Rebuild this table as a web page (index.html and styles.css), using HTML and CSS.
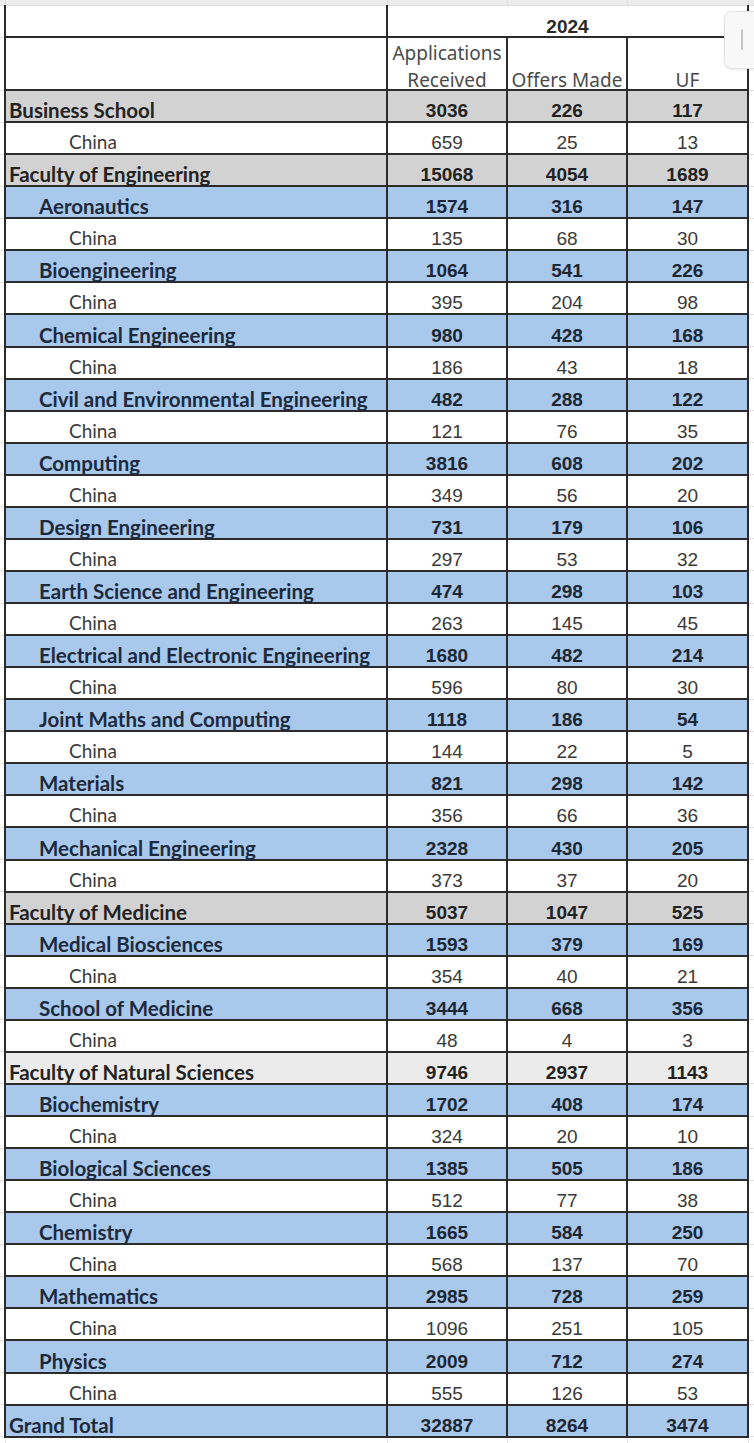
FILE: index.html
```html
<!DOCTYPE html>
<html lang="en">
<head>
<meta charset="utf-8">
<title>Applications 2024</title>
<link rel="stylesheet" href="styles.css">
</head>
<body>
<div class="sheet">
<table class="grid">
  <colgroup>
    <col class="c-gut"><col class="c-label"><col class="c-num"><col class="c-num"><col class="c-num3"><col class="c-gut2">
  </colgroup>
  <thead>
    <tr class="strip"><td class="gut"></td><td></td><td></td><td></td><td></td><td class="gut"></td></tr>
    <tr class="h1"><td class="gut"></td><td class="lbl"></td><th colspan="3" class="year">2024</th><td class="gut"></td></tr>
    <tr class="h2"><td class="gut"></td><td class="lbl"></td><th class="hd"><span class="hdt">Applications<br>Received</span></th><th class="hd"><span class="hdt">Offers Made</span></th><th class="hd"><span class="hdt">UF</span></th><td class="gut"></td></tr>
  </thead>
  <tbody>
    <tr class="fac"><td class="gut"></td><td class="lbl l0">Business School</td><td>3036</td><td>226</td><td>117</td><td class="gut"></td></tr>
    <tr class="cn"><td class="gut"></td><td class="lbl l2">China</td><td>659</td><td>25</td><td>13</td><td class="gut"></td></tr>
    <tr class="fac"><td class="gut"></td><td class="lbl l0">Faculty of Engineering</td><td>15068</td><td>4054</td><td>1689</td><td class="gut"></td></tr>
    <tr class="dep"><td class="gut"></td><td class="lbl l1">Aeronautics</td><td>1574</td><td>316</td><td>147</td><td class="gut"></td></tr>
    <tr class="cn"><td class="gut"></td><td class="lbl l2">China</td><td>135</td><td>68</td><td>30</td><td class="gut"></td></tr>
    <tr class="dep"><td class="gut"></td><td class="lbl l1">Bioengineering</td><td>1064</td><td>541</td><td>226</td><td class="gut"></td></tr>
    <tr class="cn"><td class="gut"></td><td class="lbl l2">China</td><td>395</td><td>204</td><td>98</td><td class="gut"></td></tr>
    <tr class="dep"><td class="gut"></td><td class="lbl l1">Chemical Engineering</td><td>980</td><td>428</td><td>168</td><td class="gut"></td></tr>
    <tr class="cn"><td class="gut"></td><td class="lbl l2">China</td><td>186</td><td>43</td><td>18</td><td class="gut"></td></tr>
    <tr class="dep"><td class="gut"></td><td class="lbl l1">Civil and Environmental Engineering</td><td>482</td><td>288</td><td>122</td><td class="gut"></td></tr>
    <tr class="cn"><td class="gut"></td><td class="lbl l2">China</td><td>121</td><td>76</td><td>35</td><td class="gut"></td></tr>
    <tr class="dep"><td class="gut"></td><td class="lbl l1">Computing</td><td>3816</td><td>608</td><td>202</td><td class="gut"></td></tr>
    <tr class="cn"><td class="gut"></td><td class="lbl l2">China</td><td>349</td><td>56</td><td>20</td><td class="gut"></td></tr>
    <tr class="dep"><td class="gut"></td><td class="lbl l1">Design Engineering</td><td>731</td><td>179</td><td>106</td><td class="gut"></td></tr>
    <tr class="cn"><td class="gut"></td><td class="lbl l2">China</td><td>297</td><td>53</td><td>32</td><td class="gut"></td></tr>
    <tr class="dep"><td class="gut"></td><td class="lbl l1">Earth Science and Engineering</td><td>474</td><td>298</td><td>103</td><td class="gut"></td></tr>
    <tr class="cn"><td class="gut"></td><td class="lbl l2">China</td><td>263</td><td>145</td><td>45</td><td class="gut"></td></tr>
    <tr class="dep"><td class="gut"></td><td class="lbl l1">Electrical and Electronic Engineering</td><td>1680</td><td>482</td><td>214</td><td class="gut"></td></tr>
    <tr class="cn"><td class="gut"></td><td class="lbl l2">China</td><td>596</td><td>80</td><td>30</td><td class="gut"></td></tr>
    <tr class="dep"><td class="gut"></td><td class="lbl l1">Joint Maths and Computing</td><td>1118</td><td>186</td><td>54</td><td class="gut"></td></tr>
    <tr class="cn"><td class="gut"></td><td class="lbl l2">China</td><td>144</td><td>22</td><td>5</td><td class="gut"></td></tr>
    <tr class="dep"><td class="gut"></td><td class="lbl l1">Materials</td><td>821</td><td>298</td><td>142</td><td class="gut"></td></tr>
    <tr class="cn"><td class="gut"></td><td class="lbl l2">China</td><td>356</td><td>66</td><td>36</td><td class="gut"></td></tr>
    <tr class="dep"><td class="gut"></td><td class="lbl l1">Mechanical Engineering</td><td>2328</td><td>430</td><td>205</td><td class="gut"></td></tr>
    <tr class="cn"><td class="gut"></td><td class="lbl l2">China</td><td>373</td><td>37</td><td>20</td><td class="gut"></td></tr>
    <tr class="fac"><td class="gut"></td><td class="lbl l0">Faculty of Medicine</td><td>5037</td><td>1047</td><td>525</td><td class="gut"></td></tr>
    <tr class="dep"><td class="gut"></td><td class="lbl l1">Medical Biosciences</td><td>1593</td><td>379</td><td>169</td><td class="gut"></td></tr>
    <tr class="cn"><td class="gut"></td><td class="lbl l2">China</td><td>354</td><td>40</td><td>21</td><td class="gut"></td></tr>
    <tr class="dep"><td class="gut"></td><td class="lbl l1">School of Medicine</td><td>3444</td><td>668</td><td>356</td><td class="gut"></td></tr>
    <tr class="cn"><td class="gut"></td><td class="lbl l2">China</td><td>48</td><td>4</td><td>3</td><td class="gut"></td></tr>
    <tr class="fac fac-light"><td class="gut"></td><td class="lbl l0">Faculty of Natural Sciences</td><td>9746</td><td>2937</td><td>1143</td><td class="gut"></td></tr>
    <tr class="dep"><td class="gut"></td><td class="lbl l1">Biochemistry</td><td>1702</td><td>408</td><td>174</td><td class="gut"></td></tr>
    <tr class="cn"><td class="gut"></td><td class="lbl l2">China</td><td>324</td><td>20</td><td>10</td><td class="gut"></td></tr>
    <tr class="dep"><td class="gut"></td><td class="lbl l1">Biological Sciences</td><td>1385</td><td>505</td><td>186</td><td class="gut"></td></tr>
    <tr class="cn"><td class="gut"></td><td class="lbl l2">China</td><td>512</td><td>77</td><td>38</td><td class="gut"></td></tr>
    <tr class="dep"><td class="gut"></td><td class="lbl l1">Chemistry</td><td>1665</td><td>584</td><td>250</td><td class="gut"></td></tr>
    <tr class="cn"><td class="gut"></td><td class="lbl l2">China</td><td>568</td><td>137</td><td>70</td><td class="gut"></td></tr>
    <tr class="dep"><td class="gut"></td><td class="lbl l1">Mathematics</td><td>2985</td><td>728</td><td>259</td><td class="gut"></td></tr>
    <tr class="cn"><td class="gut"></td><td class="lbl l2">China</td><td>1096</td><td>251</td><td>105</td><td class="gut"></td></tr>
    <tr class="dep"><td class="gut"></td><td class="lbl l1">Physics</td><td>2009</td><td>712</td><td>274</td><td class="gut"></td></tr>
    <tr class="cn"><td class="gut"></td><td class="lbl l2">China</td><td>555</td><td>126</td><td>53</td><td class="gut"></td></tr>
    <tr class="dep total"><td class="gut"></td><td class="lbl l0">Grand Total</td><td>32887</td><td>8264</td><td>3474</td><td class="gut"></td></tr>
    <tr class="tail"><td class="gut"></td><td></td><td></td><td></td><td></td><td class="gut"></td></tr>
  </tbody>
</table>
<div class="scroll-handle"><span class="grip"></span></div>
</div>
</body>
</html>
```

FILE: styles.css
```css
html, body {
  margin: 0;
  padding: 0;
  background: #ffffff;
}

.sheet {
  position: relative;
  width: 754px;
  height: 1443px;
  overflow: hidden;
}

.grid {
  border-collapse: collapse;
  table-layout: fixed;
  width: 754px;
  font-family: "Liberation Sans", Arial, sans-serif;
  color: #222;
}

.c-gut { width: 5px; }
.c-label { width: 382px; }
.c-num { width: 120px; }
.c-num3 { width: 121px; }
.c-gut2 { width: 6px; }

.grid td, .grid th {
  border: 2px solid #2b2b2b;
  padding: 0;
  text-align: center;
  vertical-align: bottom;
  font-size: 19px;
  line-height: 20px;
  white-space: nowrap;
}

.grid td.gut {
  border: none;
  border-top: 1px solid #e2e2e2;
  border-bottom: 1px solid #e2e2e2;
  background: #fff;
  padding: 0;
}

/* top grey strip */
.strip { height: 5px; }
.strip td {
  padding: 0;
  line-height: 0;
  background: #ececec;
  border: 1px solid #dddddd;
  border-top: none;
}
.strip td.gut { background: #ececec; border: none; }

.h1 { height: 32px; }
.h1 td, .h1 th { border-top: none; }

.year {
  font-weight: 700;
  font-size: 18px;
  line-height: 18px !important;
  color: #2a2a2a;
}

.h2 { height: 53px; }

.hd {
  font-family: "Noto Sans", "Open Sans", sans-serif;
  font-weight: 400;
  font-size: 16px;
  color: #4a4a4a;
}
.hdt {
  display: block;
  line-height: 27px;
  margin-bottom: -5px;
}

tbody tr { height: 32.07px; }

.lbl {
  text-align: left !important;
  font-family: Lato, "Open Sans", sans-serif;
  font-size: 20.5px !important;
  line-height: 22px !important;
}
tbody .cn .lbl { font-size: 19px !important; }
.l0 { padding-left: 3px !important; }
.l1 { padding-left: 33px !important; }
.l2 { padding-left: 63px !important; }

.fac td, .dep td {
  font-weight: 700;
}
.fac td { background: #d2d2d2; color: #222; }
.fac-light td { background: #ebebeb; }
.dep td { background: #a8c8ec; color: #1d2733; }
.dep td.lbl { color: #1c2a3c; }
.fac td.gut, .dep td.gut { background: #fff; }

.cn td {
  background: #fff;
  color: #3a3a3a;
  font-weight: 400;
}

tbody tr.tail { height: 6px; }
.tail td {
  padding: 0;
  line-height: 0;
  border: none;
  border-left: 1px solid #e4e4e4;
  border-right: 1px solid #e4e4e4;
  border-top: 2px solid #2b2b2b;
}
.tail td.gut { border: none; }

.scroll-handle {
  position: absolute;
  left: 724px;
  top: 11px;
  width: 44px;
  height: 56px;
  background: #f8f8f8;
  border: 1px solid #e2e2e2;
  border-radius: 8px;
  box-shadow: 0 1px 3px rgba(0,0,0,0.08);
}
.grip {
  position: absolute;
  left: 16px;
  top: 17px;
  width: 2px;
  height: 21px;
  background: #c4c4c4;
  border-radius: 1px;
}
```
